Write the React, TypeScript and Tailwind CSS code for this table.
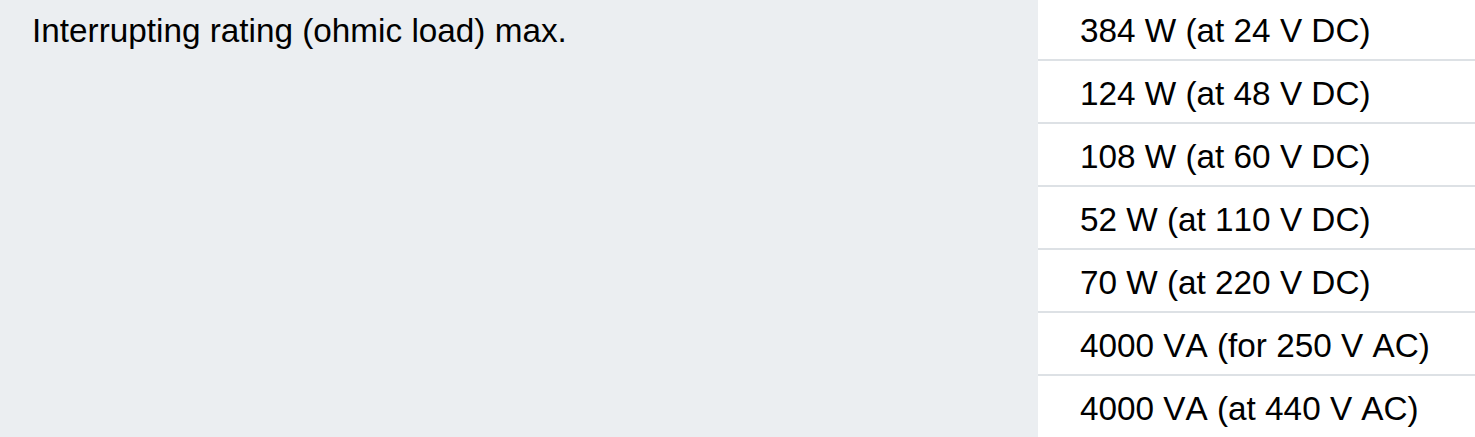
const ROWS = [
  "384 W (at 24 V DC)",
  "124 W (at 48 V DC)",
  "108 W (at 60 V DC)",
  "52 W (at 110 V DC)",
  "70 W (at 220 V DC)",
  "4000 VA (for 250 V AC)",
  "4000 VA (at 440 V AC)",
];

export default function App() {
  return (
    <div className="w-[1475px] h-[437px] overflow-hidden bg-white font-['Liberation_Sans',Arial,sans-serif] text-[33.3px] leading-[38px] text-black [font-kerning:none]">
      <div className="-mt-[2px] flex">
        {/* label cell spans all value rows */}
        <div className="w-[1038px] shrink-0 bg-[#ebeef1] pl-[32px] pt-[14px]">
          Interrupting rating (ohmic load) max.
        </div>

        <div className="flex flex-1 flex-col">
          {ROWS.map((value) => (
            <div
              key={value}
              className="h-[63px] shrink-0 border-b-2 border-[#dde1e5] pl-[42px] pt-[14px] whitespace-nowrap"
            >
              {value}
            </div>
          ))}
        </div>
      </div>
    </div>
  );
}
